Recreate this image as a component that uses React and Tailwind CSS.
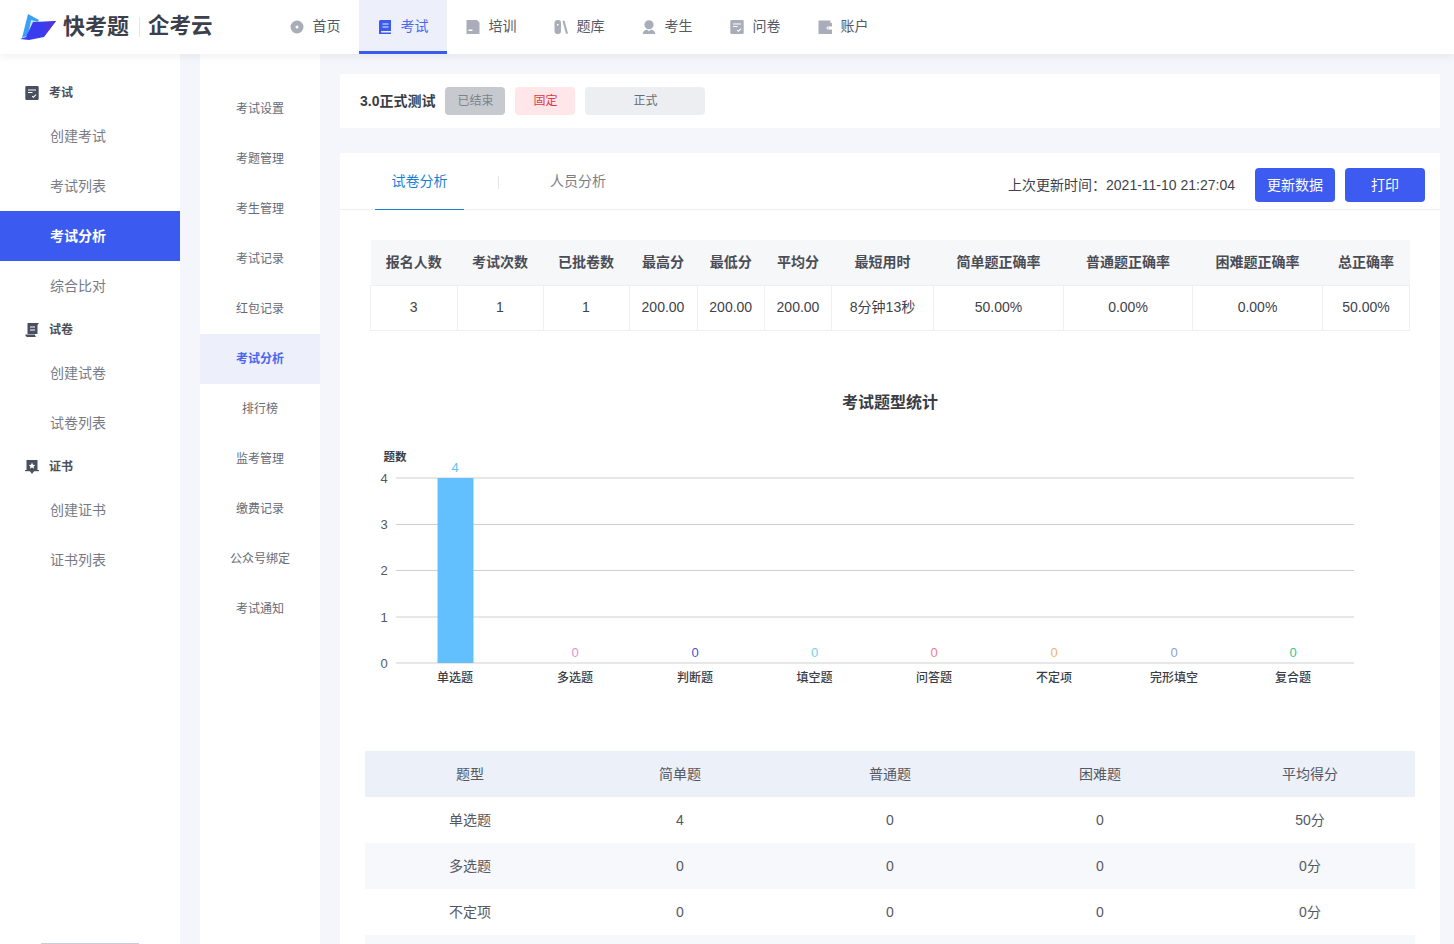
const NAV = [
  { label: '首页', icon: HomeIcon },
  { label: '考试', icon: ExamIcon, active: true },
  { label: '培训', icon: TrainIcon },
  { label: '题库', icon: BankIcon },
  { label: '考生', icon: PersonIcon },
  { label: '问卷', icon: SurveyIcon },
  { label: '账户', icon: WalletIcon }
]

const SIDE = [
  { title: '考试', icon: SurveyIcon, items: ['创建考试', '考试列表', '考试分析', '综合比对'] },
  { title: '试卷', icon: ScrollIcon, items: ['创建试卷', '试卷列表'] },
  { title: '证书', icon: BadgeIcon, items: ['创建证书', '证书列表'] }
]

const SUB = ['考试设置', '考题管理', '考生管理', '考试记录', '红包记录', '考试分析', '排行榜', '监考管理', '缴费记录', '公众号绑定', '考试通知']

const STATS = [
  ['报名人数', '3', 'w-[86.5px]'],
  ['考试次数', '1', 'w-[86px]'],
  ['已批卷数', '1', 'w-[86px]'],
  ['最高分', '200.00', 'w-[68px]'],
  ['最低分', '200.00', 'w-[67.5px]'],
  ['平均分', '200.00', 'w-[67px]'],
  ['最短用时', '8分钟13秒', 'w-[102px]'],
  ['简单题正确率', '50.00%', 'w-[130px]'],
  ['普通题正确率', '0.00%', 'w-[129px]'],
  ['困难题正确率', '0.00%', 'w-[130px]'],
  ['总正确率', '50.00%', 'w-[87px]']
]

const CHART = [
  { name: '单选题', x: 455, v: 4, c: '#62c0ff' },
  { name: '多选题', x: 575, v: 0, c: '#e58fdc' },
  { name: '判断题', x: 695, v: 0, c: '#3c5bd8' },
  { name: '填空题', x: 814.5, v: 0, c: '#6fd6e0' },
  { name: '问答题', x: 934, v: 0, c: '#ef7f8a' },
  { name: '不定项', x: 1054, v: 0, c: '#f5b26b' },
  { name: '完形填空', x: 1174, v: 0, c: '#8f9fd8' },
  { name: '复合题', x: 1293, v: 0, c: '#2fc794' }
]

const TYPES = [
  ['单选题', '4', '0', '0', '50分'],
  ['多选题', '0', '0', '0', '0分'],
  ['不定项', '0', '0', '0', '0分']
]

export default function App() {
  return (
    <div className="h-[944px] overflow-hidden flex flex-col bg-[#f5f6fb] font-['Liberation_Sans','Noto_Sans_CJK_SC',sans-serif]">
      <Header />
      <div className="flex flex-1 min-h-0">
        <Sidebar />
        <SubNav />
        <main className="ml-5 w-[1100px] pt-5 flex flex-col">
          <ExamInfo />
          <Analysis />
        </main>
      </div>
    </div>
  )
}

function Header() {
  return (
    <header className="relative z-10 h-[54px] shrink-0 bg-white flex shadow-[0_2px_8px_rgba(40,50,90,0.08)]">
      <div className="w-[271px] shrink-0 flex items-center pl-5">
        <Logo />
        <span className="ml-[7px] w-[66px] text-[22px] leading-none font-bold text-[#3b404c]">快考题</span>
        <span className="ml-[10px] w-px h-5 bg-[#e4e5ea]" />
        <span className="ml-2 text-[21.5px] leading-none font-bold text-[#3b404c]">企考云</span>
      </div>
      <nav className="flex">
        {NAV.map(n => (
          <div
            key={n.label}
            className={n.active
              ? 'w-[88px] flex items-center justify-center gap-[9px] bg-[#edf0fb] border-b-[3px] border-[#3b5bf0] text-[#4a66ee] text-sm'
              : 'w-[88px] flex items-center justify-center gap-[9px] pb-[3px] text-[#555963] text-sm'}
          >
            <n.icon className={n.active ? 'mt-[3px] text-[#3b5bf0]' : 'mt-[3px] text-[#a9adb9]'} />
            <span>{n.label}</span>
          </div>
        ))}
      </nav>
    </header>
  )
}

function Sidebar() {
  return (
    <aside className="w-[180px] shrink-0 bg-white pt-5 flex flex-col">
      {SIDE.map(g => (
        <div key={g.title}>
          <div className="h-[37px] flex items-center pl-[25px] gap-[10px] text-xs font-bold text-[#4c505c]">
            <g.icon className="text-[#4a4f60]" />
            <span>{g.title}</span>
          </div>
          {g.items.map(i => (
            <div
              key={i}
              className={i === '考试分析'
                ? 'h-[50px] flex items-center pl-[50px] text-sm font-bold text-white bg-[#3b5bf0]'
                : 'h-[50px] flex items-center pl-[50px] text-sm text-[#787b85]'}
            >
              {i}
            </div>
          ))}
        </div>
      ))}
      <div className="mt-auto ml-[41px] w-[98px] h-px bg-[#c9cbe3]" />
    </aside>
  )
}

function SubNav() {
  return (
    <div className="ml-5 w-[120px] shrink-0 bg-white pt-[30px]">
      {SUB.map(s => (
        <div
          key={s}
          className={s === '考试分析'
            ? 'h-[50px] flex items-center justify-center text-xs font-bold text-[#4a66ee] bg-[#edf0fb]'
            : 'h-[50px] flex items-center justify-center text-xs text-[#666a76]'}
        >
          {s}
        </div>
      ))}
    </div>
  )
}

function ExamInfo() {
  return (
    <div className="h-[54px] shrink-0 bg-white flex items-center pl-5">
      <span className="text-sm font-bold text-[#3a3d45] mr-[10px]">3.0正式测试</span>
      <span className="w-[60px] h-7 rounded-sm bg-[#c6c9ce] text-xs text-[#7e828c] flex items-center justify-center">已结束</span>
      <span className="ml-[10px] w-[60px] h-7 rounded-sm bg-[#ffe6e8] text-xs text-[#e0364c] flex items-center justify-center">固定</span>
      <span className="ml-[10px] w-[120px] h-7 rounded-sm bg-[#edeef1] text-xs text-[#686c76] flex items-center justify-center">正式</span>
    </div>
  )
}

function Analysis() {
  return (
    <section className="mt-[25px] flex-1 bg-white overflow-hidden">
      <div className="h-[57px] border-b border-[#eeeff2] flex items-start">
        <div className="ml-[35px] w-[89px] h-[57px] border-b border-[#1a7fd8] pt-[19px] text-center text-sm leading-[19px] text-[#1a7fd8]">试卷分析</div>
        <span className="ml-[34px] mt-[23px] w-px h-[13px] bg-[#e6e7ea]" />
        <div className="ml-[51px] pt-[19px] text-sm leading-[19px] text-[#7b7e87]">人员分析</div>
        <div className="ml-auto mr-[15px] mt-[15px] flex items-center">
          <span className="text-sm text-[#3f424a] mr-5">上次更新时间：2021-11-10 21:27:04</span>
          <button className="w-20 h-[34px] rounded bg-[#3d5af1] text-sm text-white">更新数据</button>
          <button className="ml-[10px] w-20 h-[34px] rounded bg-[#3d5af1] text-sm text-white">打印</button>
        </div>
      </div>

      <div className="mt-[30px] ml-[30px] w-[1039px]">
        <table className="w-full table-fixed border-collapse">
          <thead>
            <tr className="h-[45px] bg-[#f6f7f9]">
              {STATS.map(s => (
                <th key={s[0]} className={`${s[2]} p-0 text-sm font-bold text-[#4a4d55] text-center`}>{s[0]}</th>
              ))}
            </tr>
          </thead>
          <tbody>
            <tr className="h-[45px]">
              {STATS.map(s => (
                <td key={s[0]} className="p-0 pb-[2px] border border-[#eeeff2] text-sm text-[#3f424a] text-center">{s[1]}</td>
              ))}
            </tr>
          </tbody>
        </table>
      </div>

      <h2 className="mt-[61px] ml-[100px] w-[900px] text-center text-base leading-[22px] font-bold text-[#3a3d45]">考试题型统计</h2>
      <Chart />

      <div className="ml-[25px] w-[1050px] mt-[51px] text-sm text-[#555862]">
        <div className="h-[46px] grid grid-cols-5 items-center text-center bg-[#ebf0f9]">
          {['题型', '简单题', '普通题', '困难题', '平均得分'].map(h => <span key={h}>{h}</span>)}
        </div>
        {TYPES.map((r, i) => (
          <div key={r[0]} className={i % 2 ? 'h-[46px] grid grid-cols-5 items-center text-center bg-[#f7f8fb]' : 'h-[46px] grid grid-cols-5 items-center text-center'}>
            {r.map((c, j) => <span key={j}>{c}</span>)}
          </div>
        ))}
        <div className="h-[46px] bg-[#f7f8fb]" />
      </div>
    </section>
  )
}

function Chart() {
  // viewBox is in page coordinates so the numbers read straight off the screenshot
  const ticks = [[0, 663], [1, 617], [2, 570.5], [3, 524.5], [4, 478]]
  return (
    <svg className="block mt-[26px]" width="1100" height="260" viewBox="340 440 1100 260">
      <text x="395" y="461" fontSize="11.5" fontWeight="700" fill="#3a3d45" textAnchor="middle">题数</text>
      {ticks.map(([v, y]) => (
        <g key={v}>
          <line x1="396" x2="1354" y1={y} y2={y} stroke="#cfcfcf" strokeWidth="1" />
          <text x="384" y={y + 4.5} fontSize="13" fill="#55585f" textAnchor="middle">{v}</text>
        </g>
      ))}
      <rect x="437.5" y="478" width="36" height="185" fill="#62c0ff" />
      {CHART.map(c => (
        <g key={c.name}>
          <text x={c.x} y={c.v ? 472 : 657} fontSize="13" fill={c.c} textAnchor="middle">{c.v}</text>
          <text x={c.x} y="682" fontSize="12" fontWeight="500" fill="#3a3d45" textAnchor="middle">{c.name}</text>
        </g>
      ))}
    </svg>
  )
}

function Logo() {
  return (
    <svg width="36" height="28" viewBox="0 0 36 28" className="shrink-0">
      <path d="M8 1 L19 7 L9 22 L2 25 Z" fill="#3aa0f5" />
      <path d="M11 7 L19 9 L8 22 Z" fill="#bfe3fb" />
      <path d="M13 9 L36 8 L24 24 L9 27 L0 26 L6 24 Z" fill="#3b3cf0" />
      <path d="M26 9 L36 8 L25 22 Z" fill="#4f37e0" />
    </svg>
  )
}

function HomeIcon({ className }) {
  return (
    <svg width="14" height="14" viewBox="0 0 14 14" className={className}>
      <path fillRule="evenodd" fill="currentColor" d="M7 .5a6.5 6.5 0 1 1 0 13A6.5 6.5 0 0 1 7 .5Zm0 5a1.5 1.5 0 1 0 0 3 1.5 1.5 0 0 0 0-3Z" />
    </svg>
  )
}

function ExamIcon({ className }) {
  return (
    <svg width="14" height="14" viewBox="0 0 14 14" className={className}>
      <path fillRule="evenodd" fill="currentColor" d="M2.5 0H13v11H3.5a.8.8 0 0 0 0 1.5H13V14H1V1.5A1.5 1.5 0 0 1 2.5 0ZM4.5 3.5v1h6v-1h-6Zm0 3v1h6v-1h-6Z" />
    </svg>
  )
}

function TrainIcon({ className }) {
  return (
    <svg width="14" height="14" viewBox="0 0 14 14" className={className}>
      <path fillRule="evenodd" fill="currentColor" d="M.5 0H11l2.5 2.5V14H.5V0ZM2.5 9.5V11h4V9.5h-4Z" />
    </svg>
  )
}

function BankIcon({ className }) {
  return (
    <svg width="14" height="14" viewBox="0 0 14 14" className={className}>
      <rect x="0.5" y="0" width="6.5" height="14" rx="3" fill="currentColor" />
      <rect x="3" y="4" width="1.5" height="1.5" fill="#fff" />
      <path d="M8.5 1 L10.5 .5 L14 13.5 L12 14 Z" fill="currentColor" />
    </svg>
  )
}

function PersonIcon({ className }) {
  return (
    <svg width="14" height="14" viewBox="0 0 14 14" className={className}>
      <circle cx="7" cy="4.8" r="4.6" fill="currentColor" />
      <path d="M.8 14c0-3 2.6-4.4 6.2-4.4s6.2 1.4 6.2 4.4H.8Z" fill="currentColor" />
      <path d="M4.7 9.2h4.6L7 11.2Z" fill="#fff" />
    </svg>
  )
}

function SurveyIcon({ className }) {
  return (
    <svg width="14" height="14" viewBox="0 0 14 14" className={className}>
      <path fillRule="evenodd" fill="currentColor" d="M1.5 0h11A1.2 1.2 0 0 1 13.7 1.2v11.6A1.2 1.2 0 0 1 12.500 14h-11A1.2 1.2 0 0 1 .3 12.800V1.200A1.2 1.2 0 0 1 1.500 0Zm1.500 3.500v1h8v-1h-8Zm0 2.500v1h4.500V6H3Zm4.500 3.700-.7.7 1.600 1.600 3-3-.7-.7-2.300 2.300-.9-.9Z" />
    </svg>
  )
}

function WalletIcon({ className }) {
  return (
    <svg width="14" height="14" viewBox="0 0 14 14" className={className}>
      <path fillRule="evenodd" fill="currentColor" d="M.5 .5h12v2.500H14v3.500h-4a1.500 1.500 0 0 0 0 3h4V14H.5V.5Zm9.500 7a.5.5 0 0 0 0 1h1v-1h-1Z" />
    </svg>
  )
}

function ScrollIcon({ className }) {
  return (
    <svg width="14" height="14" viewBox="0 0 14 14" className={className}>
      <path fillRule="evenodd" fill="currentColor" d="M2.500 0h11.500l-1.500 2v9h-10V0Zm2.500 3.500v1h5v-1H5Zm0 3v1h5v-1H5ZM.5 11.500h9.500c0 1 .5 2.500 1.500 2.500H2.500A2 2 0 0 1 .5 11.500Z" />
    </svg>
  )
}

function BadgeIcon({ className }) {
  return (
    <svg width="14" height="14" viewBox="0 0 14 14" className={className}>
      <path fillRule="evenodd" fill="currentColor" d="M1.500 0h11v10.500H9.500L7 14l-2.500-3.500H1.500V0ZM7 2.500 6 4.700l-2.300.2 1.700 1.600-.5 2.300L7 7.600l2.100 1.200-.5-2.300 1.700-1.600L8 4.700 7 2.500Z" />
      <rect x="0" y="10" width="14" height="1.200" fill="currentColor" />
    </svg>
  )
}
